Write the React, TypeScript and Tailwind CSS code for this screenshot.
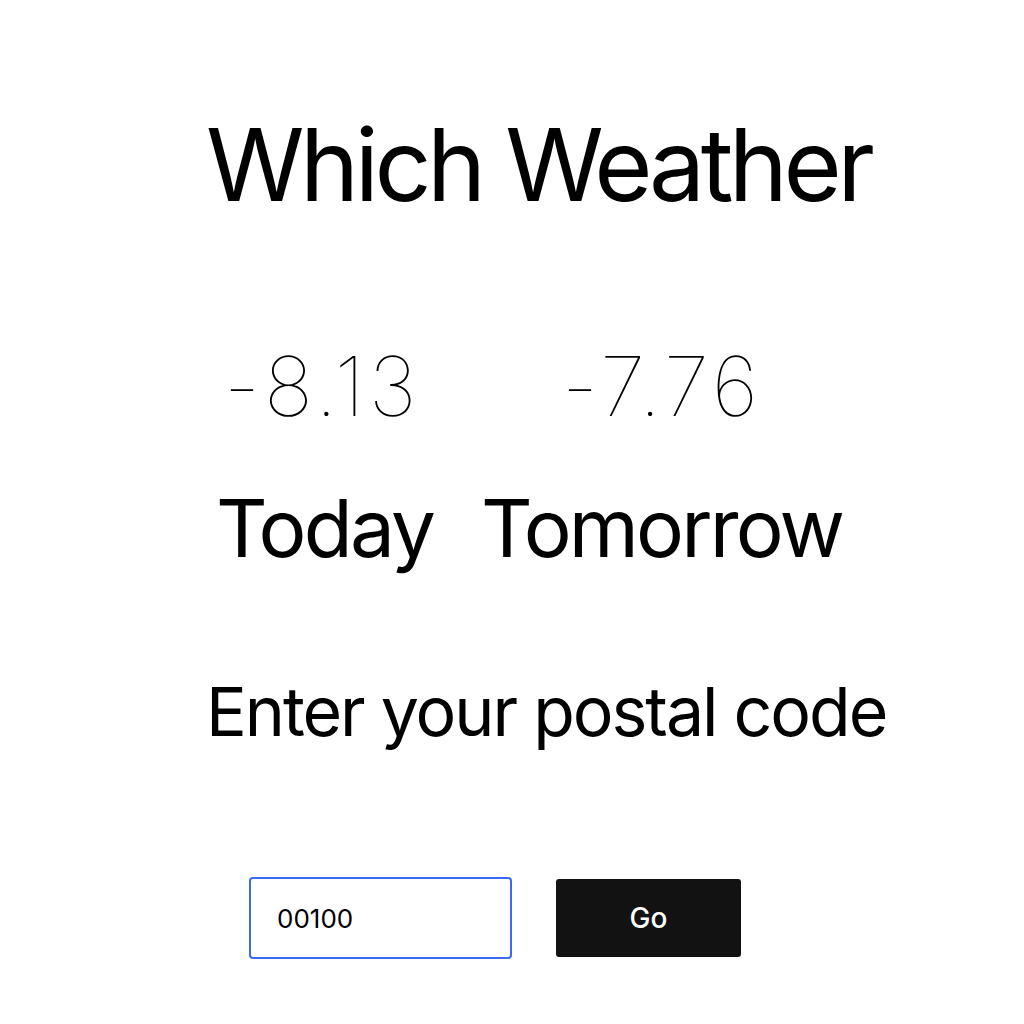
import React from "react";

export default function App() {
  return (
    <div className="min-h-screen bg-white text-black font-['Inter',sans-serif]">
      <div className="pl-[206px] pt-[105px]">
        {/* Title */}
        <h1 className="text-[100px] leading-[120px] font-normal tracking-[-0.045em]">
          Which Weather
        </h1>

        {/* Temperatures */}
        <div className="flex mt-[117px] pl-[18px]">
          <div className="w-[270px] text-[82px] leading-[90px] font-thin tracking-[0.05em]">
            -8.13
          </div>
          <div className="w-[270px] pl-[68px] text-[82px] leading-[90px] font-thin tracking-[0.05em]">
            -7.76
          </div>
        </div>

        {/* Day labels */}
        <div className="flex gap-[48px] mt-[48px] pl-[10px] text-[80px] leading-[96px] tracking-[-0.035em]">
          <span>Today</span>
          <span>Tomorrow</span>
        </div>

        {/* Prompt */}
        <p className="mt-[95px] text-[68px] leading-[80px] tracking-[-0.03em]">
          Enter your postal code
        </p>

        {/* Form */}
        <form className="flex items-center gap-[44px] mt-[126px] pl-[43px]">
          <input
            defaultValue="00100"
            className="w-[263px] h-[82px] px-[26px] text-[26px] border-2 border-[#3b6af5] rounded-[4px] outline-none"
          />
          <button
            type="button"
            className="w-[185px] h-[78px] bg-[#121212] text-white text-[28px] font-medium rounded-[3px]"
          >
            Go
          </button>
        </form>
      </div>
    </div>
  );
}
